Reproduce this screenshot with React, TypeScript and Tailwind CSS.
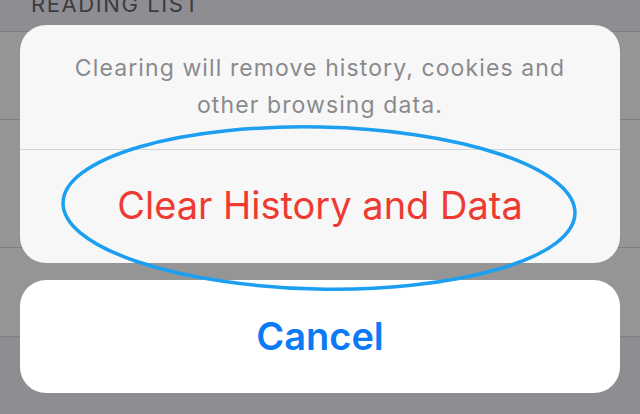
export default function App() {
  return (
    <div
      className="relative w-[640px] h-[414px] overflow-hidden bg-[#8e8d92]"
      style={{ fontFamily: "Inter, Roboto, 'Liberation Sans', sans-serif" }}
    >
      {/* background list behind the sheet */}
      <div className="flex flex-col">
        <div className="h-[32px] relative border-b border-[#7d7d80]">
          <div className="absolute left-[31px] top-[-12px] text-[22px] tracking-[1.6px] text-[#3c3b40]">
            READING LIST
          </div>
        </div>
        <div className="h-[88px] bg-[#959595] border-b border-[#7f7f7f]" />
        <div className="h-[128px] bg-[#959595] border-b border-[#7f7f7f]" />
        <div className="h-[89px] bg-[#959595] border-b border-[#7f7f80]" />
        <div className="flex-1 bg-[#8e8e91]" />
      </div>

      {/* action sheet */}
      <div className="absolute inset-x-[20px] top-[25px] flex flex-col gap-[17px]">
        <div className="rounded-[26px] bg-[#f7f7f7] flex flex-col overflow-hidden">
          <div className="h-[124px] flex items-center justify-center px-4 text-center text-[23px] leading-[37px] tracking-[1.1px] text-[#8a8a8e]">
            <p>
              Clearing will remove history, cookies and
              <br />
              other browsing data.
            </p>
          </div>
          <div className="h-px bg-[#d3d3d6]" />
          <div className="h-[113px] flex items-center justify-center pb-[3px] text-[38px] text-[#ee3a31]">
            Clear History and Data
          </div>
        </div>
        <div className="h-[113px] rounded-[26px] bg-white flex items-center justify-center text-[38px] font-semibold text-[#0b7bf5]">
          Cancel
        </div>
      </div>

      {/* hand-drawn highlight ellipse */}
      <svg className="absolute left-0 top-0 pointer-events-none" width="640" height="414">
        <ellipse
          cx="319"
          cy="208"
          rx="256"
          ry="81"
          transform="rotate(1.2 319 208)"
          fill="none"
          stroke="#1c9ff0"
          strokeWidth="3.5"
        />
      </svg>
    </div>
  )
}
